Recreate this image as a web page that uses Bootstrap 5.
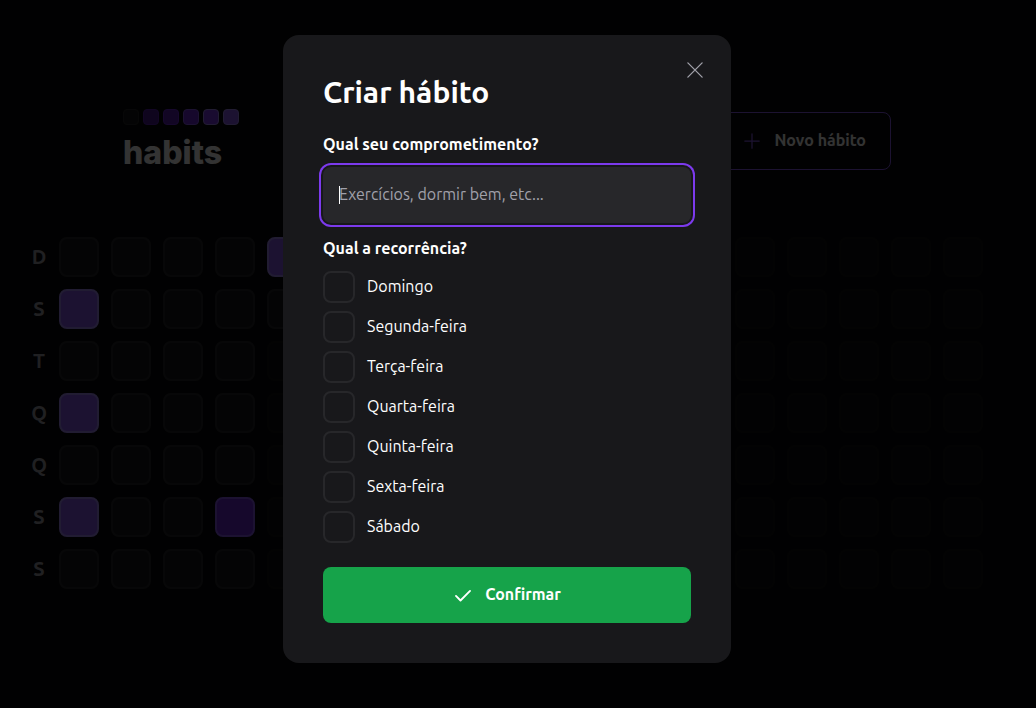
<!DOCTYPE html>
<html lang="pt-BR">
<head>
<meta charset="utf-8">
<meta name="viewport" content="width=device-width, initial-scale=1">
<title>habits</title>
<link rel="stylesheet" href="https://cdn.jsdelivr.net/npm/bootstrap@5.3.0/dist/css/bootstrap.min.css">
<style>
  body { background: #09090a; color: #fff; font-family: Ubuntu, "Noto Sans", sans-serif; font-size: 16px; overflow: hidden; }
  .page-shell { padding: 0 22px 10px 0; }
  .summary { gap: 64px; }
  .top-bar { width: 100%; max-width: 768px; }
  .brand-name { font: 800 32px/40px Inter, sans-serif; margin-top: 8px; }
  .brand-squares { gap: 4px; }
  .brand-squares span { width: 16px; height: 16px; border: 1px solid; border-radius: 4px; }
  .tone-0 { background: #18181b; border-color: #27272a !important; }
  .tone-1 { background: #4c1d95; border-color: #5b21b6 !important; }
  .tone-2 { background: #5b21b6; border-color: #6d28d9 !important; }
  .tone-3 { background: #6d28d9; border-color: #8b5cf6 !important; }
  .tone-4 { background: #7c3aed; border-color: #a78bfa !important; }
  .tone-5 { background: #8b5cf6; border-color: #a78bfa !important; }
  .btn-new { border: 1px solid #8b5cf6; border-radius: 8px; color: #fff; font-weight: 700; padding: 16px 24px; gap: 12px; }
  .btn-new svg { color: #8b5cf6; }
  .btn-text { line-height: 22px; padding-bottom: 2px; }
  .board { gap: 12px; }
  .week-labels, .days { display: grid; grid-template-rows: repeat(7, 40px); grid-auto-flow: column; gap: 12px; }
  .week-labels { width: 16px; font-weight: 700; font-size: 20px; line-height: 40px; color: #a1a1aa; justify-items: center; }
  .day { width: 40px; height: 40px; border: 2px solid; border-radius: 8px; }
  .day-later { opacity: .3; }
  .shade { background: rgba(0, 0, 0, .8); padding: 0 22px 10px 0; }
  .shade .modal-dialog { max-width: 448px; }
  .shade .modal-content { background: #18181b; border: 0; border-radius: 16px; padding: 40px; color: #fff; }
  .dialog-close { position: absolute; top: 23px; right: 24px; color: #a1a1aa; line-height: 0; }
  .dialog-title { font-size: 30px; line-height: 34px; font-weight: 700; margin: 0 0 24px; }
  .field-title { font-size: 16px; line-height: 22px; font-weight: 700; margin: 0 0 12px; }
  .habit-input, .habit-input:focus { height: 56px; padding: 15px 16px 17px; background: #27272a; border: 0; border-radius: 8px; color: #fff; caret-color: transparent; line-height: 24px; box-shadow: 0 0 0 2px #18181b, 0 0 0 4px #7c3aed; }
  .habit-input::placeholder { color: #a1a1aa; opacity: 1; }
  .text-caret { position: absolute; left: 16px; top: 19px; width: 1px; height: 18px; background: #fff; }
  .habit-input:not(:placeholder-shown) { caret-color: #fff; }
  .habit-input:not(:placeholder-shown) + .text-caret { display: none; }
  fieldset { margin-top: 14px; }
  .week-option { gap: 12px; min-height: 32px; margin: 0; padding: 0; line-height: 30px; }
  .week-option .form-check-input { width: 32px; height: 32px; margin: 0; float: none; flex: none; background-color: #18181b; border: 2px solid #27272a; border-radius: 8px; }
  .week-option .form-check-input:checked { background-color: #22c55e; }
  .btn-confirm, .btn-confirm:hover { background: #16a34a; color: #fff; font-weight: 700; border: 0; border-radius: 8px; padding: 16px; margin-top: 24px; gap: 12px; }
</style>
</head>
<body>
<main class="page-shell min-vh-100 d-flex justify-content-center align-items-center">
  <div class="summary d-flex flex-column align-items-center">
    <header class="top-bar d-flex justify-content-between align-items-center">
      <div>
        <div class="brand-squares d-flex"><span class="tone-0"></span><span class="tone-1"></span><span class="tone-2"></span><span class="tone-3"></span><span class="tone-4"></span><span class="tone-5"></span></div>
        <div class="brand-name">habits</div>
      </div>
      <button type="button" class="btn btn-new d-flex align-items-center">
        <svg width="20" height="20" viewBox="0 0 256 256" fill="none" stroke="currentColor" stroke-width="16" stroke-linecap="round" aria-hidden="true"><path d="M36 128h184M128 36v184"/></svg>
        <span class="btn-text">Novo hábito</span>
      </button>
    </header>
    <section class="board d-flex">
      <div class="week-labels"><span>D</span><span>S</span><span>T</span><span>Q</span><span>Q</span><span>S</span><span>S</span></div>
      <div class="days" id="days"></div>
    </section>
  </div>
</main>

<div class="modal shade show d-block" role="dialog" aria-modal="true" aria-labelledby="dialogTitle">
  <div class="modal-dialog modal-dialog-centered">
    <div class="modal-content">
      <button type="button" class="dialog-close btn p-0 border-0" aria-label="Fechar">
        <svg width="24" height="24" viewBox="0 0 256 256" fill="none" stroke="currentColor" stroke-width="14" stroke-linecap="round"><path d="M52 52l152 152M204 52L52 204"/></svg>
      </button>
      <h1 class="dialog-title" id="dialogTitle">Criar hábito</h1>
      <form>
        <label class="field-title d-block" for="habit">Qual seu comprometimento?</label>
        <div class="position-relative">
          <input class="form-control habit-input" id="habit" type="text" placeholder="Exercícios, dormir bem, etc..." autocomplete="off" autofocus>
          <span class="text-caret" aria-hidden="true"></span>
        </div>
        <fieldset>
          <legend class="field-title">Qual a recorrência?</legend>
          <div class="d-flex flex-column gap-2">
            <div class="form-check week-option d-flex"><input class="form-check-input" type="checkbox" id="d0"><label for="d0">Domingo</label></div>
            <div class="form-check week-option d-flex"><input class="form-check-input" type="checkbox" id="d1"><label for="d1">Segunda-feira</label></div>
            <div class="form-check week-option d-flex"><input class="form-check-input" type="checkbox" id="d2"><label for="d2">Terça-feira</label></div>
            <div class="form-check week-option d-flex"><input class="form-check-input" type="checkbox" id="d3"><label for="d3">Quarta-feira</label></div>
            <div class="form-check week-option d-flex"><input class="form-check-input" type="checkbox" id="d4"><label for="d4">Quinta-feira</label></div>
            <div class="form-check week-option d-flex"><input class="form-check-input" type="checkbox" id="d5"><label for="d5">Sexta-feira</label></div>
            <div class="form-check week-option d-flex"><input class="form-check-input" type="checkbox" id="d6"><label for="d6">Sábado</label></div>
          </div>
        </fieldset>
        <button type="submit" class="btn btn-confirm w-100 d-flex justify-content-center align-items-center">
          <svg width="20" height="20" viewBox="0 0 256 256" fill="none" stroke="currentColor" stroke-width="24" stroke-linecap="round" stroke-linejoin="round" aria-hidden="true"><path d="M38 140l58 58L218 76"/></svg>
          <span class="btn-text">Confirmar</span>
        </button>
      </form>
    </div>
  </div>
</div>
<script src="https://cdn.jsdelivr.net/npm/bootstrap@5.3.0/dist/js/bootstrap.bundle.min.js"></script>
<script>
  // 18 weeks of days; the days after the 30th have not happened yet
  const tones = { 1: 5, 3: 5, 5: 5, 26: 3, 28: 5 };
  const days = document.getElementById('days');
  for (let i = 0; i < 18 * 7; i++) {
    const day = document.createElement('div');
    day.className = `day tone-${tones[i] || 0}` + (i < 30 ? '' : ' day-later');
    days.append(day);
  }
  document.getElementById('habit').focus();
</script>
</body>
</html>
